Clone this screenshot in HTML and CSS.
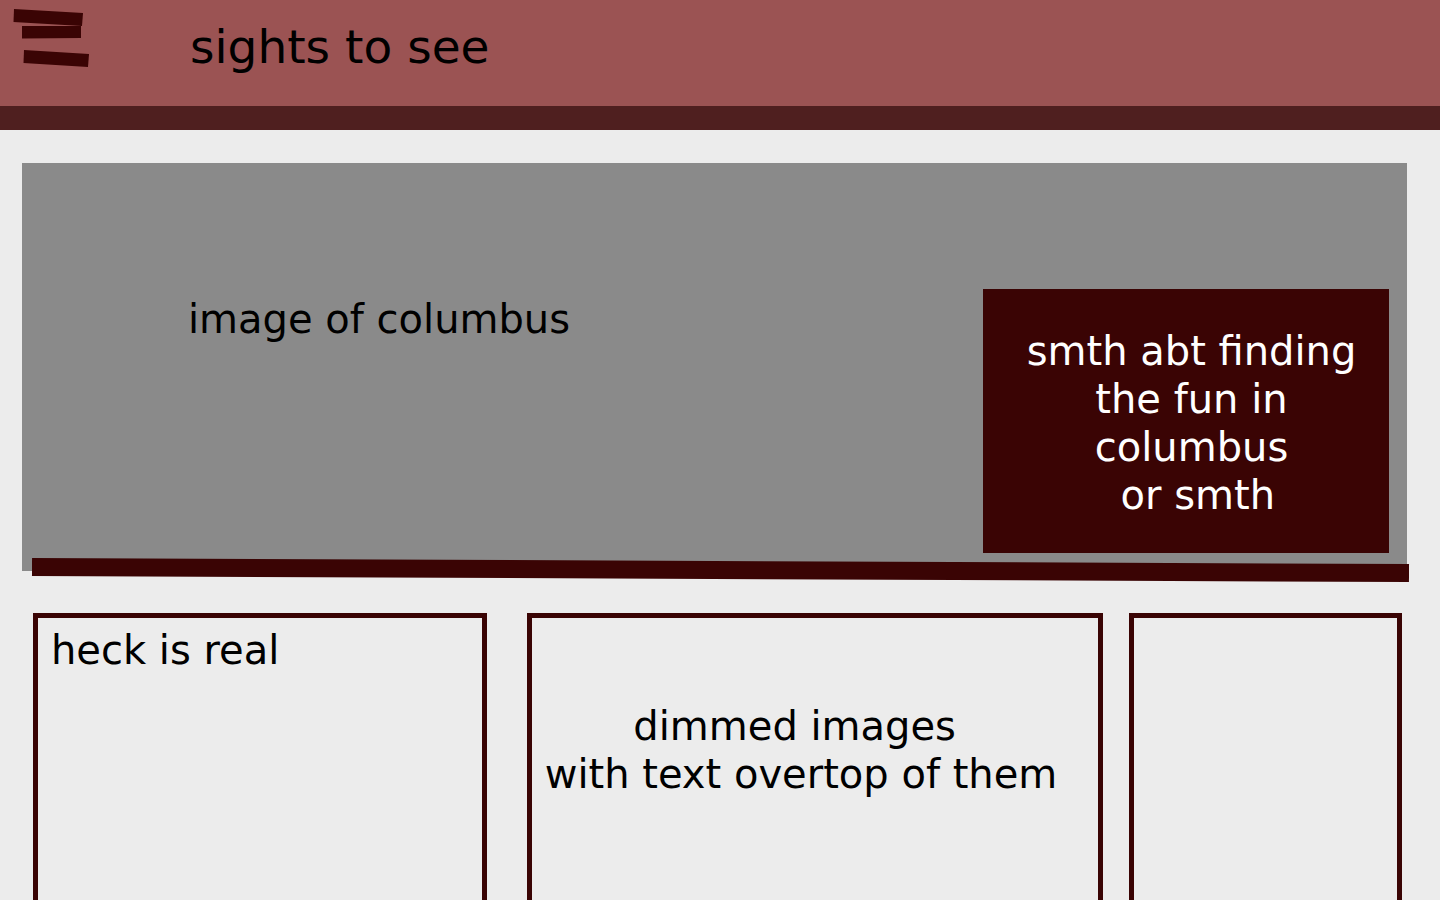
FILE: index.html
```html
<!DOCTYPE html>
<html lang="en">
<head>
    <meta charset="UTF-8">
    <meta name="viewport" content="width=device-width, initial-scale=1.0">
    <title>sights to see</title>
    <link rel="stylesheet" href="styles.css">
</head>
<body>
    <header class="top">
        <svg class="menu" width="100" height="80" viewBox="0 0 100 80">
            <polygon points="14,9 83,13 82,26 13.5,22" fill="#3a0404"/>
            <polygon points="22,26 81,26 81,38 22,38.5" fill="#3a0404"/>
            <polygon points="24,50 89,54 88,67 23.5,63" fill="#3a0404"/>
        </svg>
        <h1 class="title">sights to see</h1>
    </header>
    <div class="band"></div>

    <section class="hero">
        <div class="hero-text">image of columbus</div>
        <div class="hero-box">smth abt finding<br>the fun in<br>columbus<br>&nbsp;or smth</div>
    </section>
    <div class="rule"></div>

    <div class="cards">
        <div class="card card-one">
            <div class="card-title">heck is real</div>
        </div>
        <div class="card card-two">
            <div class="card-center">dimmed images&nbsp;<br>with text overtop of them</div>
        </div>
        <div class="card card-three"></div>
    </div>
</body>
</html>
```

FILE: styles.css
```css
* {
    box-sizing: border-box;
    margin: 0;
    padding: 0;
}

body {
    font-family: "DejaVu Sans", Verdana, sans-serif;
    background-color: #ececec;
    color: #000;
    overflow: hidden;
}

.top {
    display: flex;
    align-items: flex-start;
    height: 106px;
    background-color: #9b5353;
}

.menu {
    display: block;
    flex-shrink: 0;
}

.title {
    font-size: 47px;
    font-weight: normal;
    padding: 19px 0 0 90px;
}

.band {
    height: 24px;
    background-color: #4f1f1f;
}

.hero {
    display: flex;
    justify-content: space-between;
    align-items: flex-end;
    width: 1385px;
    height: 408px;
    margin: 33px 0 0 22px;
    padding: 0 18px 18px 166px;
    background-color: #8a8a8a;
}

.hero-text {
    align-self: flex-start;
    margin-top: 133px;
    font-size: 40px;
}

.hero-box {
    width: 406px;
    height: 264px;
    padding: 38px 0 0 11px;
    background-color: #3a0404;
    color: #fff;
    font-size: 40px;
    line-height: 48px;
    text-align: center;
}

.rule {
    width: 1377px;
    height: 18px;
    margin: -10px 0 0 32px;
    background-color: #3a0404;
    transform: rotate(0.25deg);
}

.cards {
    display: flex;
    margin-top: 34px;
}

.card {
    height: 400px;
    border: 5px solid #3a0404;
    font-size: 40px;
}

.card-one {
    width: 454px;
    margin-left: 33px;
    padding: 9px 0 0 13px;
}

.card-two {
    width: 576px;
    margin-left: 40px;
    padding: 84px 28px 0 0;
}

.card-three {
    width: 273px;
    margin-left: 26px;
}

.card-center {
    line-height: 48px;
    text-align: center;
}
```
